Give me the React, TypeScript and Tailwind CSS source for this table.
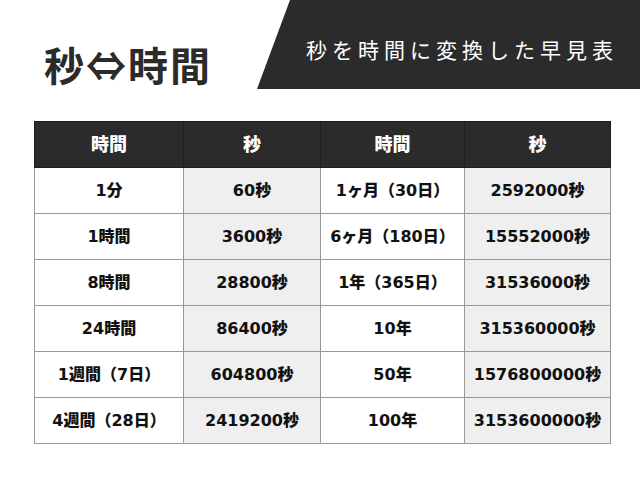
const rows: [string, string, string, string][] = [
  ['1分', '60秒', '1ヶ月（30日）', '2592000秒'],
  ['1時間', '3600秒', '6ヶ月（180日）', '15552000秒'],
  ['8時間', '28800秒', '1年（365日）', '31536000秒'],
  ['24時間', '86400秒', '10年', '315360000秒'],
  ['1週間（7日）', '604800秒', '50年', '1576800000秒'],
  ['4週間（28日）', '2419200秒', '100年', '3153600000秒'],
];

const font = "font-['Noto_Sans_CJK_JP','Noto_Sans',sans-serif]";
const cellFont = "font-['DejaVu_Sans','Noto_Sans_CJK_JP',sans-serif]";

export default function App() {
  return (
    <div className={`w-[640px] h-[480px] bg-white ${font}`}>
      <div className="flex h-[89px]">
        <div className="w-[257px] flex items-start pl-[44px] pt-[44px]">
          <h1 className="text-[40px] font-bold text-[#2b2b2b] leading-none tracking-[2px]">秒⇔時間</h1>
        </div>
        <div className="flex-1 bg-[#2b2b2b] [clip-path:polygon(33px_0,100%_0,100%_100%,0_100%)] flex items-center pl-[49px] pt-[10px]">
          <span className="text-white text-[21px] tracking-[5px] leading-none">秒を時間に変換した早見表</span>
        </div>
      </div>
      <table className={`mt-[32px] ml-[34px] w-[576px] border-collapse table-fixed text-[16px] font-black ${cellFont}`}>
        <colgroup>
          <col className="w-[149px]" />
          <col className="w-[137px]" />
          <col className="w-[144px]" />
          <col className="w-[146px]" />
        </colgroup>
        <thead>
          <tr className="h-[46px] bg-[#2b2b2b] text-white text-[18px]">
            {['時間', '秒', '時間', '秒'].map((h, i) => (
              <th key={i} className="border border-[#1e1e1e] font-black">
                {h}
              </th>
            ))}
          </tr>
        </thead>
        <tbody>
          {rows.map((r, i) => (
            <tr key={i} className="h-[46px] text-[#111]">
              {r.map((c, j) => (
                <td
                  key={j}
                  className={`border border-[#999] text-center ${j % 2 === 1 ? 'bg-[#efefef]' : 'bg-white'}`}
                >
                  {c}
                </td>
              ))}
            </tr>
          ))}
        </tbody>
      </table>
    </div>
  );
}
